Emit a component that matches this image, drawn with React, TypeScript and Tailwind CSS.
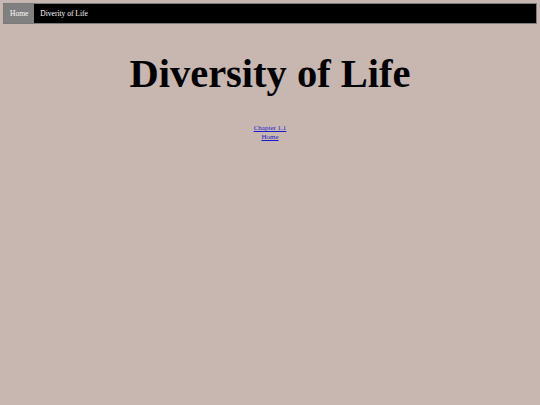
export default function App() {
  return (
    <div className="min-h-[405px] bg-[#c8b6b1] pt-[3px] px-[3px]" style={{ fontFamily: '"Liberation Serif", serif' }}>
      <div className="flex h-[21px] border border-[#7a7a7a] bg-black text-[7.5px] text-white">
        <div className="flex items-center bg-[#808080] px-[6px]">Home</div>
        <div className="flex items-center px-[6px]">Diverity of Life</div>
      </div>
      <h1 className="mt-[27px] text-center text-[40.5px] font-bold leading-[46px] text-black">Diversity of Life</h1>
      <div className="mt-[27px] flex flex-col items-center text-[7px] leading-[8.5px]">
        <a href="#" className="text-[#1a1acc] underline">Chapter 1.1</a>
        <a href="#" className="text-[#1a1acc] underline">Home</a>
      </div>
    </div>
  );
}
